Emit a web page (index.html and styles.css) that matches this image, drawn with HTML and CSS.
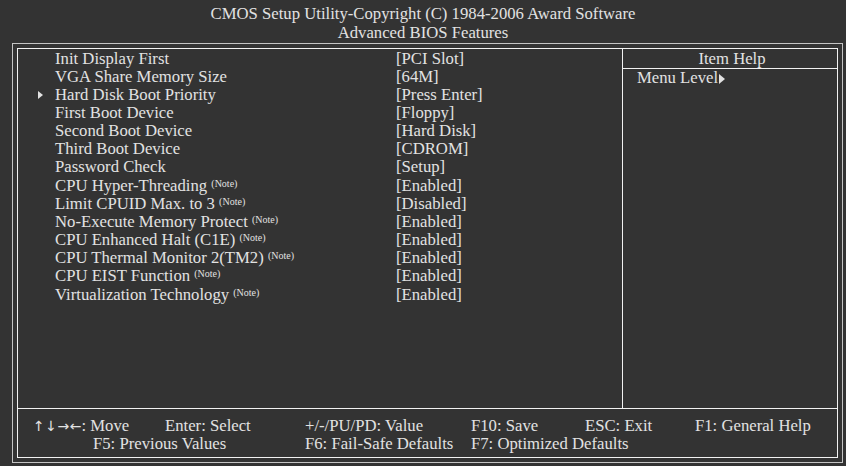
FILE: index.html
```html
<!DOCTYPE html>
<html lang="en">
    <head>
        <meta charset="UTF-8" />
        <title>Advanced BIOS Features</title>
        <link rel="stylesheet" href="styles.css">
    </head>

    <body>
        <div class="title">
            <div>CMOS Setup Utility-Copyright (C) 1984-2006 Award Software</div>
            <div>Advanced BIOS Features</div>
        </div>
        <div class="frame">
            <div class="inner">
                <div class="main">
                    <div class="items">
                        <div class="row"><span></span><span>Init Display First</span><span>[PCI Slot]</span></div>
                        <div class="row"><span></span><span>VGA Share Memory Size</span><span>[64M]</span></div>
                        <div class="row"><span class="arrow"></span><span>Hard Disk Boot Priority</span><span>[Press Enter]</span></div>
                        <div class="row"><span></span><span>First Boot Device</span><span>[Floppy]</span></div>
                        <div class="row"><span></span><span>Second Boot Device</span><span>[Hard Disk]</span></div>
                        <div class="row"><span></span><span>Third Boot Device</span><span>[CDROM]</span></div>
                        <div class="row"><span></span><span>Password Check</span><span>[Setup]</span></div>
                        <div class="row"><span></span><span>CPU Hyper-Threading <sup class="note">(Note)</sup></span><span>[Enabled]</span></div>
                        <div class="row"><span></span><span>Limit CPUID Max. to 3 <sup class="note">(Note)</sup></span><span>[Disabled]</span></div>
                        <div class="row"><span></span><span>No-Execute Memory Protect <sup class="note">(Note)</sup></span><span>[Enabled]</span></div>
                        <div class="row"><span></span><span>CPU Enhanced Halt (C1E) <sup class="note">(Note)</sup></span><span>[Enabled]</span></div>
                        <div class="row"><span></span><span>CPU Thermal Monitor 2(TM2) <sup class="note">(Note)</sup></span><span>[Enabled]</span></div>
                        <div class="row"><span></span><span>CPU EIST Function <sup class="note">(Note)</sup></span><span>[Enabled]</span></div>
                        <div class="row"><span></span><span>Virtualization Technology <sup class="note">(Note)</sup></span><span>[Enabled]</span></div>
                    </div>
                    <div class="help">
                        <div class="help-title">Item Help</div>
                        <div class="help-text">Menu Level<span class="arrow inline"></span></div>
                    </div>
                </div>
                <div class="keys">
                    <div class="keys-row first">
                        <span class="k1"><span class="arrows">&#8593;&#8595;&#8594;&#8592;</span>: Move</span>
                        <span class="k2">Enter: Select</span>
                        <span class="k3">+/-/PU/PD: Value</span>
                        <span class="k4">F10: Save</span>
                        <span class="k5">ESC: Exit</span>
                        <span>F1: General Help</span>
                    </div>
                    <div class="keys-row second">
                        <span class="k6">F5: Previous Values</span>
                        <span class="k3">F6: Fail-Safe Defaults</span>
                        <span>F7: Optimized Defaults</span>
                    </div>
                </div>
            </div>
        </div>
    </body>
</html>
```

FILE: styles.css
```css
* {
    box-sizing: border-box;
}
html {
    background-color: #333333;
    color: #e2e2e2;
}
body {
    margin: 0;
    font-family: "Liberation Serif", "Times New Roman", serif;
    font-size: 16.7px;
    line-height: 18.15px;
}
.title {
    height: 43px;
    padding-top: 5px;
    text-align: center;
    line-height: 18.6px;
}
.frame {
    margin-left: 12px;
    width: 831px;
    height: 420px;
    border: 1px solid #c4c4c4;
    padding: 4px;
}
.inner {
    height: 100%;
    border: 1px solid #f2f2f2;
    display: flex;
    flex-direction: column;
}
.main {
    height: 360px;
    display: grid;
    grid-template-columns: 605px 1fr;
    border-bottom: 1px solid #f2f2f2;
}
.items {
    border-right: 1px solid #f2f2f2;
    padding-top: 0.5px;
}
.row {
    display: grid;
    grid-template-columns: 17px 341px 1fr;
    padding-left: 20px;
    white-space: nowrap;
}
.arrow {
    display: inline-block;
    width: 0;
    height: 0;
    margin-top: 5px;
    border-top: 4.5px solid transparent;
    border-bottom: 4.5px solid transparent;
    border-left: 5px solid #e2e2e2;
    justify-self: start;
    align-self: start;
}
.arrow.inline {
    margin: 0 0 0 1px;
    border-top-width: 5px;
    border-bottom-width: 5px;
    border-left-width: 6px;
    vertical-align: -1px;
}
.note {
    font-size: 10px;
    line-height: 0;
    vertical-align: 4px;
}
.help-title {
    height: 20px;
    text-align: center;
    border-bottom: 1px solid #f2f2f2;
    padding-top: 1px;
    padding-left: 4px;
}
.help-text {
    padding-left: 14px;
}
.keys {
    flex: 1;
    padding-top: 8px;
}
.keys-row {
    display: flex;
    white-space: nowrap;
}
.keys-row.first {
    padding-left: 15px;
}
.keys-row.second {
    padding-left: 75px;
}
.arrows {
    font-family: "DejaVu Sans", sans-serif;
    font-size: 14px;
    letter-spacing: 0.5px;
    margin-right: -0.5px;
}
.k1 {
    width: 132px;
}
.k2 {
    width: 140px;
}
.k3 {
    width: 166px;
}
.k4 {
    width: 114px;
}
.k5 {
    width: 110px;
}
.k6 {
    width: 212px;
}
```
